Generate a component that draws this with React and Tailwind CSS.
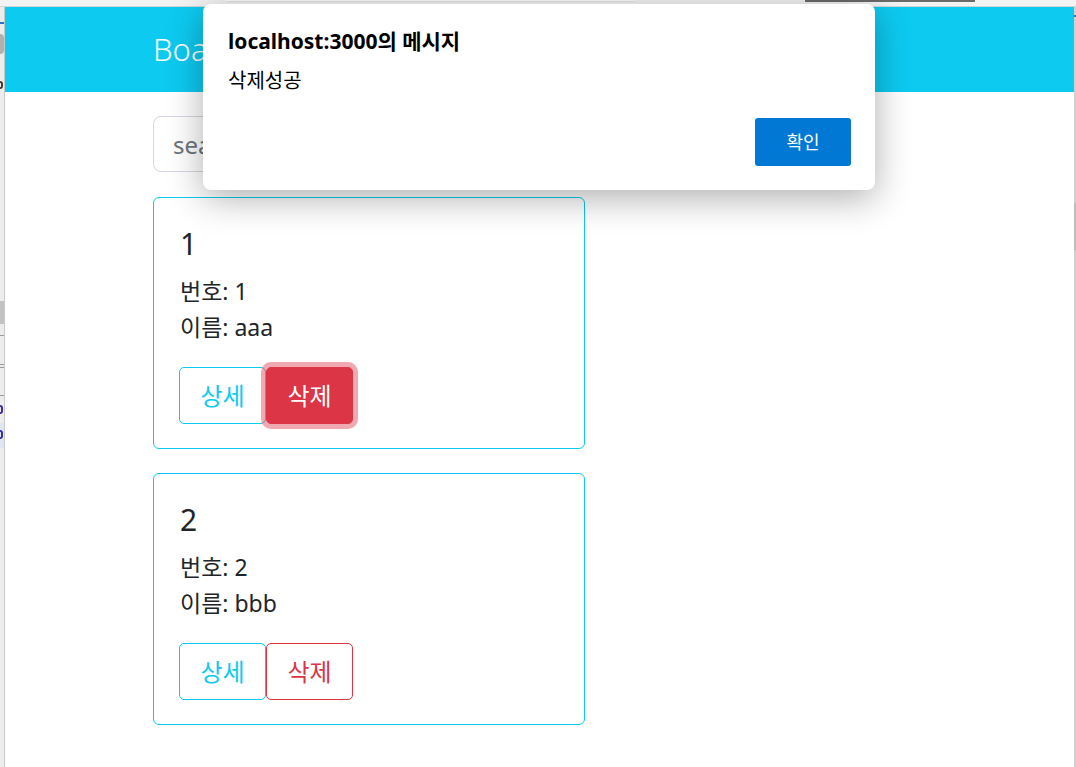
import React from "react";

const font = { fontFamily: '"Noto Sans", "Noto Sans CJK KR", sans-serif' };

const items = [
  { id: 1, name: "aaa", focused: true },
  { id: 2, name: "bbb", focused: false },
];

function BoardCard({ item }) {
  return (
    <div className="w-[432px] h-[252px] border border-[#0dcaf0] rounded-[6px] px-[25px] pt-[26px] text-[#212529]">
      <div className="h-[40px] text-[30px] leading-[40px] pl-px">{item.id}</div>
      <div className="mt-[10px] h-[36px] text-[23px] leading-[34px] pl-px">번호: {item.id}</div>
      <div className="h-[36px] text-[23px] leading-[34px] pl-px">이름: {item.name}</div>
      <div className="mt-[21px] flex">
        <button className="w-[87px] h-[57px] border border-[#0dcaf0] rounded-[5px] text-[#0dcaf0] text-[24px] bg-white">
          상세
        </button>
        {item.focused ? (
          <button className="w-[87px] h-[57px] border border-[#dc3545] rounded-[5px] text-white text-[24px] bg-[#dc3545] shadow-[0_0_0_5px_rgba(225,83,97,0.5)]">
            삭제
          </button>
        ) : (
          <button className="w-[87px] h-[57px] border border-[#dc3545] rounded-[5px] text-[#dc3545] text-[24px] bg-white">
            삭제
          </button>
        )}
      </div>
    </div>
  );
}

export default function App() {
  return (
    <div className="relative w-[1076px] h-[767px] overflow-hidden bg-white" style={font}>
      {/* window top strip */}
      <div className="h-[7px] bg-[#f3f3f3] border-b border-[#d4d4d4] flex items-start">
        <div className="ml-[226px] w-[408px] h-[2px] bg-white border-b border-[#e2e2e2]" />
        <div className="ml-[171px] w-[170px] h-[2px] bg-[#6a6a6a]" />
      </div>

      <div className="flex h-[760px]">
        {/* neighbour window sliver */}
        <div className="w-[5px] bg-[#ececec] border-r border-[#c9c9c9] flex flex-col">
          <div className="mt-[15px] h-[2px] bg-[#2f6fc6]" />
          <div className="mt-[10px] h-[20px] rounded-r-full bg-[#b0b0b0] w-[4px]" />
          <div className="mt-[27px] h-[8px] w-[3px] border-2 border-l-0 border-[#4a3a2a] rounded-r-full" />
          <div className="mt-[212px] h-[23px] bg-[#c2c2c2]" />
          <div className="mt-[11px] h-px bg-[#9a9a9a]" />
          <div className="mt-[28px] h-[4px] border-y border-[#9a9a9a]" />
          <div className="mt-[27px] h-px bg-[#9a9a9a]" />
          <div className="mt-[9px] h-[9px] w-[3px] border-2 border-l-0 border-[#3a2ea0] rounded-r-full" />
          <div className="mt-[9px] h-[25px] bg-[#dde6f2] pt-[7px]">
            <div className="h-[9px] w-[3px] border-2 border-l-0 border-[#3a2ea0] rounded-r-full" />
          </div>
        </div>

        {/* page */}
        <div className="flex-1">
          <div className="h-[85px] bg-[#0dcaf0] flex items-center pl-[148px]">
            <span className="text-white text-[31px] font-light">Board</span>
          </div>

          <div className="pl-[148px] pt-[24px]">
            <input
              placeholder="search"
              className="w-[432px] h-[56px] border border-[#d3d9df] rounded-[8px] px-[19px] text-[24px] placeholder:text-[#6c757d] outline-none"
            />
            <div className="mt-[25px] flex flex-col gap-[24px]">
              {items.map(item => (
                <BoardCard key={item.id} item={item} />
              ))}
            </div>
          </div>
        </div>

        {/* right edge */}
        <div className="w-[2px] bg-[#d0d0d0] flex flex-col">
          <div className="mt-[8px] h-[2px] bg-[#2f6fc6]" />
          <div className="mt-[186px] h-[47px] bg-[#bdbdbd]" />
        </div>
      </div>

      {/* alert dialog */}
      <div className="absolute left-[203px] top-[4px] w-[672px] h-[186px] bg-white rounded-[8px] shadow-[0_8px_36px_rgba(0,0,0,0.32)] px-[25px] pt-[21px]">
        <div className="text-[21px] font-bold leading-[32px] text-black">localhost:3000의 메시지</div>
        <div className="mt-[10px] text-[20px] leading-[28px] text-black">삭제성공</div>
        <div className="flex justify-end mt-[23px] -mr-px">
          <button className="w-[96px] h-[48px] rounded-[3px] bg-[#0078d4] text-white text-[18px]">
            확인
          </button>
        </div>
      </div>
    </div>
  );
}
